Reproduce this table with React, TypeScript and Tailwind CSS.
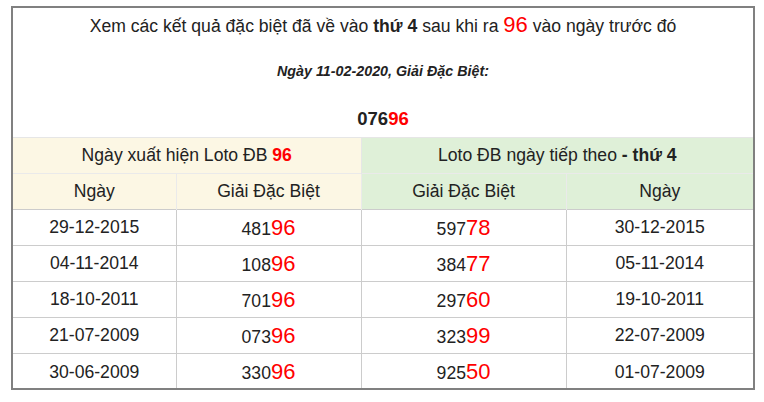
const rows = [
  { d1: "29-12-2015", g1: "481", t1: "96", g2: "597", t2: "78", d2: "30-12-2015" },
  { d1: "04-11-2014", g1: "108", t1: "96", g2: "384", t2: "77", d2: "05-11-2014" },
  { d1: "18-10-2011", g1: "701", t1: "96", g2: "297", t2: "60", d2: "19-10-2011" },
  { d1: "21-07-2009", g1: "073", t1: "96", g2: "323", t2: "99", d2: "22-07-2009" },
  { d1: "30-06-2009", g1: "330", t1: "96", g2: "925", t2: "50", d2: "01-07-2009" },
];

const App = () => {
  return (
    <div className="w-[764px] h-[402px] bg-white pt-[6px] pl-[11px] font-['Liberation_Sans',Arial,sans-serif] text-[#222]">
      <div className="w-[744px] h-[384px] border-2 border-[#808080] overflow-hidden">
        <div className="h-[32px] flex items-center justify-center text-[17.6px]">
          <span>
            Xem các kết quả đặc biệt đã về vào <b>thứ 4</b> sau khi ra{" "}
            <span className="text-[#ff0000] text-[22px]">96</span> vào ngày trước đó
          </span>
        </div>
        <div className="h-[64px] flex items-center justify-center text-[14.3px] italic font-bold">
          Ngày 11-02-2020, Giải Đặc Biệt:
        </div>
        <div className="h-[33px] flex items-start justify-center pt-[1px] text-[18.5px] font-bold">
          <span>
            076<span className="text-[#ff0000]">96</span>
          </span>
        </div>
        <table className="w-[740px] table-fixed border-collapse text-[17.6px] text-center">
          <colgroup>
            <col className="w-[163px]" />
            <col className="w-[185px]" />
            <col className="w-[205px]" />
            <col className="w-[187px]" />
          </colgroup>
          <thead>
            <tr className="h-[36px]">
              <th colSpan={2} className="font-normal bg-[#fcf7e4] border-t border-r border-[#e6e6e6]">
                Ngày xuất hiện Loto ĐB <b className="text-[#ff0000]">96</b>
              </th>
              <th colSpan={2} className="font-normal bg-[#dff0d8] border-t border-[#e6e6e6]">
                Loto ĐB ngày tiếp theo <b>- thứ 4</b>
              </th>
            </tr>
            <tr className="h-[36px]">
              <th className="font-normal bg-[#fcf7e4] border-t border-r border-[#eaeaea]">Ngày</th>
              <th className="font-normal bg-[#fcf7e4] border-t border-r border-[#eaeaea]">Giải Đặc Biệt</th>
              <th className="font-normal bg-[#dff0d8] border-t border-r border-[#eaeaea]">Giải Đặc Biệt</th>
              <th className="font-normal bg-[#dff0d8] border-t border-[#eaeaea]">Ngày</th>
            </tr>
          </thead>
          <tbody>
            {rows.map((r) => (
              <tr key={r.d1} className="h-[36px]">
                <td className="border-t border-r border-[#cccccc]">{r.d1}</td>
                <td className="border-t border-r border-[#cccccc]">
                  {r.g1}
                  <span className="text-[#ff0000] text-[22px]">{r.t1}</span>
                </td>
                <td className="border-t border-r border-[#cccccc]">
                  {r.g2}
                  <span className="text-[#ff0000] text-[22px]">{r.t2}</span>
                </td>
                <td className="border-t border-[#cccccc]">{r.d2}</td>
              </tr>
            ))}
          </tbody>
        </table>
      </div>
    </div>
  );
};

export default App;
